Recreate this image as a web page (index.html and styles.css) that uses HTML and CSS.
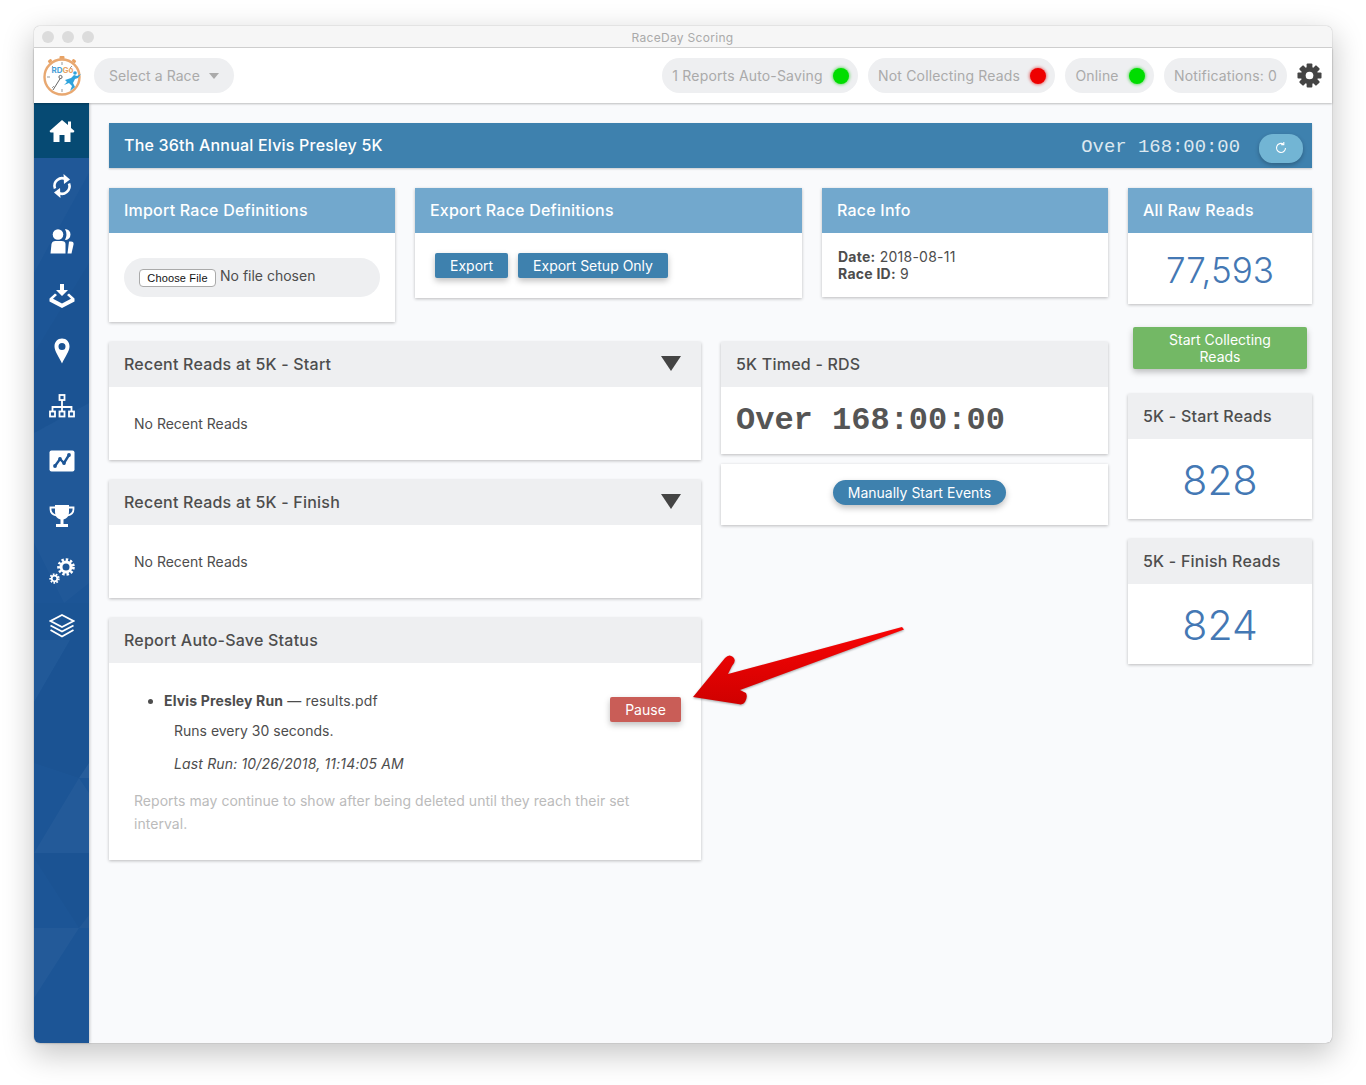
FILE: index.html
```html
<!DOCTYPE html>
<html lang="en">
<head>
<meta charset="utf-8"/>
<title>RaceDay Scoring</title>
<link rel="stylesheet" href="styles.css">
</head>

<body>

<div class="window">

<div class="title_bar">
	<span class="traffic_light"></span>
	<span class="traffic_light"></span>
	<span class="traffic_light"></span>
	<span class="window_title">RaceDay Scoring</span>
</div>

<div class="top_bar">
	<svg class="logo" viewBox="0 0 40 40">
		<rect x="17.500" y="0" width="5" height="3.500" rx="1" fill="#e8a263"/>
		<rect x="6" y="3.500" width="4" height="3" rx="1" fill="#e8a263" transform="rotate(-38 8 5)"/>
		<rect x="30" y="3.500" width="4" height="3" rx="1" fill="#e8a263" transform="rotate(38 32 5)"/>
		<circle cx="20" cy="21" r="17.500" fill="#fff" stroke="#e8a871" stroke-width="2.400"/>
		<path d="M20 6v3M20 33v3M5 21h3M10 10l2 2M30 10l-2 2M10 32l2-2" stroke="#999" stroke-width="1"/>
		<text x="9.500" y="16.500" class="logo_text"><tspan fill="#4a9fd8">RD</tspan><tspan fill="#e8a263">Go</tspan></text>
		<path d="M18.500 22L11 34" stroke="#666" stroke-width="1"/>
		<circle cx="18.500" cy="21" r="1.600" fill="none" stroke="#666" stroke-width="1"/>
		<path d="M23 24l6-2 3-3 3 1 4-2-3 4-3 1-2 4 2 4-5 4 2-5-3-3-5 2 3-3z" fill="#2ea3dc"/>
		<circle cx="33" cy="17" r="1.800" fill="#2ea3dc"/>
	</svg>
	<div class="pill select_race">Select a Race<span class="select_caret"></span></div>
	<div class="status_list">
		<div class="pill">1 Reports Auto-Saving<span class="dot dot_green"></span></div>
		<div class="pill">Not Collecting Reads<span class="dot dot_red"></span></div>
		<div class="pill">Online<span class="dot dot_green"></span></div>
		<div class="pill">Notifications: 0</div>
		<svg class="settings_gear" viewBox="0 0 26 26" fill="#444">
			<rect x="10" y="0.500" width="6" height="25" rx="1"/>
			<rect x="10" y="0.500" width="6" height="25" rx="1" transform="rotate(45 13 13)"/>
			<rect x="10" y="0.500" width="6" height="25" rx="1" transform="rotate(90 13 13)"/>
			<rect x="10" y="0.500" width="6" height="25" rx="1" transform="rotate(135 13 13)"/>
			<circle cx="13" cy="13" r="9"/>
			<circle cx="13" cy="13" r="4" fill="#fff"/>
		</svg>
	</div>
</div>

<div class="app_body">

<nav class="sidebar">
	<svg class="sidebar_pattern" viewBox="0 0 55 940" preserveAspectRatio="none">
		<polygon points="0,55 55,55 55,70 0,170" fill="#fff" opacity="0.02"/>
		<polygon points="0,250 55,160 55,300 0,330" fill="#000" opacity="0.02"/>
		<polygon points="0,330 55,300 55,480 30,500 0,440" fill="#fff" opacity="0.018"/>
		<polygon points="0,500 55,500 55,537 0,537" fill="#000" opacity="0.012"/>
		<polygon points="0,537 36,537 0,599" fill="#fff" opacity="0.025"/>
		<polygon points="0,599 36,537 55,537 55,660 45,675 0,660" fill="#000" opacity="0.02"/>
		<polygon points="45,675 55,690 55,750 0,750" fill="#fff" opacity="0.03"/>
		<polygon points="55,660 45,675 55,675" fill="#fff" opacity="0.05"/>
		<polygon points="0,750 55,750 55,825 45,825 0,755" fill="#000" opacity="0.02"/>
		<polygon points="0,825 45,825 0,895" fill="#fff" opacity="0.03"/>
		<polygon points="45,825 55,812 55,825" fill="#fff" opacity="0.03"/>
	</svg>
	<a class="nav_item nav_item_active">
		<svg class="nav_icon" viewBox="0 0 26 26" fill="#fff">
			<path d="M13 2l6 5V3.500h3V10l3.500 3-1 1.500H21.500V24h-6v-7h-5v7h-6V14.500H1.500l-1-1.500z"/>
		</svg>
	</a>
	<a class="nav_item">
		<svg class="nav_icon" viewBox="0 0 26 26" fill="#fff">
			<path d="M6 15.500A7.500 7.500 0 0 1 17 6.500" fill="none" stroke="#fff" stroke-width="2.600"/>
			<path d="M14.500 1l6.500 5.500-6 4.500z"/>
			<path d="M20 10.500A7.500 7.500 0 0 1 9 19.500" fill="none" stroke="#fff" stroke-width="2.600"/>
			<path d="M11.500 25L5 19.500l6-4.500z"/>
		</svg>
	</a>
	<a class="nav_item">
		<svg class="nav_icon" viewBox="0 0 26 26" fill="#fff">
			<circle cx="9" cy="6.500" r="5.300"/>
			<path d="M1.500 25.500l1-9.500q.5-3 4-3h6q4 0 4 3v9.500z"/>
			<path d="M16 1a5.500 5.500 0 0 1 0 11 12 12 0 0 0 0-11z"/>
			<path d="M18.500 25.500l1.500-12h2q3 0 2.500 3l-2 9z"/>
		</svg>
	</a>
	<a class="nav_item">
		<svg class="nav_icon" viewBox="0 0 26 26" fill="#fff">
			<path d="M11 1h4v6h4l-6 6-6-6h4z"/>
			<path d="M6 10.500L.5 15.500v3L13 25l12.500-6.500v-3L20 10.500 18 12l4 3.800-9 4.700-9-4.700L8 12z"/>
		</svg>
	</a>
	<a class="nav_item">
		<svg class="nav_icon" viewBox="0 0 26 26" fill="#fff" fill-rule="evenodd">
			<path d="M13 .5C8.500 .5 5.500 4 5.500 8.500 5.500 13 10 19 13 25.500 16 19 20.500 13 20.500 8.500 20.500 4 17.500 .5 13 .5zM13 5a3.500 3.500 0 1 1 0 7 3.500 3.500 0 1 1 0-7z"/>
		</svg>
	</a>
	<a class="nav_item">
		<svg class="nav_icon" viewBox="0 0 26 26" fill="none" stroke="#fff" stroke-width="1.800">
			<rect x="10.500" y="2" width="5" height="5"/>
			<path d="M13 7v11M3.500 18v-4h19v4"/>
			<rect x="1" y="18.500" width="5" height="5"/>
			<rect x="10.500" y="18.500" width="5" height="5"/>
			<rect x="20" y="18.500" width="5" height="5"/>
		</svg>
	</a>
	<a class="nav_item">
		<svg class="nav_icon" viewBox="0 0 26 26">
			<rect x=".5" y="2.500" width="25" height="21" rx="2" fill="#fff"/>
			<path d="M6 18l5-7 4 4 5-8" fill="none" stroke="#1c5596" stroke-width="2.400"/>
			<circle cx="6" cy="18" r="1.900" fill="#1c5596"/>
			<circle cx="11" cy="11" r="1.900" fill="#1c5596"/>
			<circle cx="15" cy="15" r="1.900" fill="#1c5596"/>
			<circle cx="20" cy="7" r="1.900" fill="#1c5596"/>
		</svg>
	</a>
	<a class="nav_item">
		<svg class="nav_icon" viewBox="0 0 26 26" fill="#fff">
			<path d="M6 2h14v7q0 6-5.500 7.500V21H19v3H7v-3h4.500v-4.500Q6 15 6 9z"/>
			<path d="M6 4.500H1.500V6Q1.500 11 7 12.500M20 4.500h4.500V6Q24.500 11 19 12.500" fill="none" stroke="#fff" stroke-width="1.800"/>
		</svg>
	</a>
	<a class="nav_item">
		<svg class="nav_icon" viewBox="0 0 26 26" fill="none" stroke="#fff">
			<circle cx="17" cy="9" r="7.400" stroke-width="2.800" stroke-dasharray="2.400 1.900"/>
			<circle cx="17" cy="9" r="5" stroke-width="3"/>
			<circle cx="5.500" cy="20.500" r="4.300" stroke-width="1.800" stroke-dasharray="1.700 1.300"/>
			<circle cx="5.500" cy="20.500" r="2.800" stroke-width="1.800"/>
		</svg>
	</a>
	<a class="nav_item">
		<svg class="nav_icon" viewBox="0 0 26 26" fill="none" stroke="#fff" stroke-width="1.800">
			<path d="M13 2l11.500 6L13 14 1.500 8z"/>
			<path d="M1.500 12.500L13 18.500l11.500-6"/>
			<path d="M1.500 17L13 23.500 24.500 17"/>
		</svg>
	</a>
</nav>

<main class="content">

	<div class="banner">
		<h1 class="banner_title">The 36th Annual Elvis Presley 5K</h1>
		<span class="banner_timer">Over 168:00:00</span>
		<button class="refresh_button">
			<svg class="refresh_icon" viewBox="0 0 14 14" fill="none" stroke="#fff" stroke-width="1.100">
				<path d="M11.500 7A4.500 4.500 0 1 1 9.500 3.200"/>
				<path d="M9.800 .9v2.700H7.200"/>
			</svg>
		</button>
	</div>

	<div class="columns">

		<div class="left_area">

			<div class="top_row">
				<section class="card import_card">
					<h2 class="card_head card_head_blue">Import Race Definitions</h2>
					<div class="import_body">
						<div class="file_pill">
							<button class="file_button">Choose File</button>
							<span class="file_status">No file chosen</span>
						</div>
					</div>
				</section>

				<section class="card export_card">
					<h2 class="card_head card_head_blue">Export Race Definitions</h2>
					<div class="export_body">
						<button class="button">Export</button>
						<button class="button">Export Setup Only</button>
					</div>
				</section>

				<section class="card import_card">
					<h2 class="card_head card_head_blue">Race Info</h2>
					<div class="info_body">
						<div><b>Date:</b> 2018-08-11</div>
						<div><b>Race ID:</b> 9</div>
					</div>
				</section>
			</div>

			<div class="lower_row">

				<div class="reads_column">
					<section class="card">
						<h2 class="card_head">Recent Reads at 5K - Start <span class="collapse_caret"></span></h2>
						<div class="empty_reads">No Recent Reads</div>
					</section>
					<section class="card">
						<h2 class="card_head">Recent Reads at 5K - Finish <span class="collapse_caret"></span></h2>
						<div class="empty_reads">No Recent Reads</div>
					</section>
					<section class="card">
						<h2 class="card_head">Report Auto-Save Status</h2>
						<div class="report_body">
							<div class="report_row">
								<div class="report_text">
									<ul class="report_list">
										<li><b>Elvis Presley Run</b> — results.pdf</li>
									</ul>
									<p class="report_line">Runs every 30 seconds.</p>
									<p class="report_line report_last"><i>Last Run: 10/26/2018, 11:14:05 AM</i></p>
								</div>
								<button class="button button_red">Pause</button>
							</div>
							<p class="report_note">Reports may continue to show after being deleted until they reach their set interval.</p>
						</div>
					</section>
				</div>

				<div class="timer_column">
					<section class="card">
						<h2 class="card_head">5K Timed - RDS</h2>
						<div class="big_timer">Over 168:00:00</div>
					</section>
					<section class="card start_card">
						<button class="button button_round">Manually Start Events</button>
					</section>
				</div>

			</div>
		</div>

		<div class="right_column">
			<section class="card">
				<h2 class="card_head card_head_blue">All Raw Reads</h2>
				<div class="count count_small">77,593</div>
			</section>
			<button class="button button_green">Start Collecting Reads</button>
			<section class="card">
				<h2 class="card_head">5K - Start Reads</h2>
				<div class="count">828</div>
			</section>
			<section class="card finish_card">
				<h2 class="card_head">5K - Finish Reads</h2>
				<div class="count">824</div>
			</section>
		</div>

	</div>
</main>

</div>

<svg class="red_arrow" viewBox="0 0 220 90">
	<defs>
		<linearGradient id="arrow_fill" x1="0" y1="0" x2="0" y2="1">
			<stop offset="0" stop-color="#f80505"/>
			<stop offset="1" stop-color="#cf0000"/>
		</linearGradient>
	</defs>
	<path d="M3 73L35 34Q39 29.500 43 33T42 42L38 50 212 3 214 5.500 50 66 56 69Q58 73 55 78 53 81.500 48 80z" fill="url(#arrow_fill)"/>
</svg>

</div>

</body>
</html>
```

FILE: styles.css
```css
html, body {
margin: 0;
padding: 0;
}

body {
font: 14px Inter, "Liberation Sans", sans-serif;
color: #4d4d4d;
background-color: #ffffff;
padding: 26px 34px 0;
height: 1059px;
overflow: hidden;
}

h1, h2, p, ul {
margin: 0;
}

button {
font: inherit;
letter-spacing: inherit;
border: none;
cursor: pointer;
}


/* window frame */


.window {
position: relative;
width: 1298px;
height: 1017px;
display: flex;
flex-direction: column;
background-color: #f9fafc;
border-radius: 6px;
box-shadow: 0 0 1px 0 rgba(0, 0, 0, 0.5), 0 10px 30px 2px rgba(0, 0, 0, 0.22);
}

.title_bar {
height: 21px;
flex: none;
display: flex;
align-items: center;
gap: 8px;
padding-left: 8px;
background-color: #f6f6f6;
border-bottom: 1px solid #d2d2d2;
border-radius: 6px 6px 0 0;
}

.traffic_light {
width: 12px;
height: 12px;
border-radius: 50%;
background-color: #dcdcdc;
}

.window_title {
flex: 1;
text-align: center;
font-size: 12px;
letter-spacing: 0.3px;
color: #aaaaaa;
margin-left: -69px;
margin-top: 2px;
}


/* top bar */


.top_bar {
height: 55px;
flex: none;
display: flex;
align-items: center;
padding: 0 10px 0 8px;
background-color: #ffffff;
box-shadow: 0 1px 2px rgba(0, 0, 0, 0.25);
position: relative;
z-index: 1;
}

.logo {
width: 40px;
height: 40px;
margin-right: 12px;
flex: none;
}

.logo_text {
font: bold 8px Inter, sans-serif;
}

.pill {
height: 35px;
display: flex;
align-items: center;
padding: 0 10px;
border-radius: 18px;
background-color: #eeeff1;
color: #aaaaaa;
letter-spacing: 0.17px;
white-space: pre;
}

.select_race {
padding: 0 15px;
letter-spacing: 0.07px;
}

.select_caret {
width: 0;
height: 0;
margin-left: 9px;
border-left: 5px solid transparent;
border-right: 5px solid transparent;
border-top: 6px solid #aaaaaa;
}

.status_list {
margin-left: auto;
display: flex;
align-items: center;
gap: 10px;
}

.dot {
width: 16px;
height: 16px;
border-radius: 50%;
margin-left: 10.300px;
margin-right: -1px;
}

.dot_green {
background-color: #00dd00;
box-shadow: 0 0 3px 1px rgba(0, 200, 0, 0.5);
}

.dot_red {
background-color: #ee0000;
box-shadow: 0 0 3px 1px rgba(220, 0, 0, 0.5);
}

.settings_gear {
width: 25px;
height: 25px;
}


/* sidebar */


.app_body {
flex: 1;
display: flex;
min-height: 0;
}

.sidebar {
width: 55px;
flex: none;
position: relative;
overflow: hidden;
background-color: #1c5596;
border-radius: 0 0 0 6px;
box-shadow: 1px 0 3px rgba(0, 0, 0, 0.2);
}

/* the faint triangles behind the icons */
.sidebar_pattern {
position: absolute;
left: 0;
top: 0;
width: 55px;
height: 940px;
}

.nav_item {
height: 55px;
display: flex;
align-items: center;
justify-content: center;
position: relative;
}

.nav_item_active {
background-color: #064a73;
}

.nav_icon {
width: 26px;
height: 26px;
}


/* main content */


.content {
flex: 1;
padding: 20px;
display: flex;
flex-direction: column;
gap: 20px;
}

.banner {
height: 45px;
display: flex;
align-items: center;
padding: 0 9px 0 15px;
background-color: #3e81ae;
color: #ffffff;
box-shadow: 0 1px 2px rgba(0, 0, 0, 0.2);
}

.banner_title {
font-size: 16px;
font-weight: 500;
letter-spacing: 0.2px;
flex: 1;
padding-bottom: 2px;
}

.banner_timer {
font: 18.900px "Liberation Mono", monospace;
color: #dce8f0;
margin-right: 19px;
padding-top: 2px;
}

.refresh_button {
width: 44px;
height: 29px;
margin-top: 5px;
border-radius: 14px;
background-color: #72b5d4;
box-shadow: 0 2px 4px rgba(0, 0, 0, 0.25);
display: flex;
align-items: center;
justify-content: center;
}

.refresh_icon {
width: 14px;
height: 14px;
}

.columns {
display: flex;
gap: 20px;
align-items: flex-start;
}

.left_area {
width: 999px;
display: flex;
flex-direction: column;
gap: 20px;
}

.top_row, .lower_row {
display: flex;
gap: 20px;
align-items: flex-start;
}

.reads_column {
width: 592px;
display: flex;
flex-direction: column;
gap: 20px;
}

.timer_column {
width: 387px;
display: flex;
flex-direction: column;
gap: 10px;
}

.right_column {
width: 184px;
display: flex;
flex-direction: column;
}


/* cards */


.card {
background-color: #ffffff;
box-shadow: 0 1px 3px rgba(0, 0, 0, 0.25);
}

.card_head {
height: 45px;
box-sizing: border-box;
display: flex;
align-items: center;
justify-content: space-between;
padding: 0 20px 2px 15px;
font-size: 16px;
font-weight: 500;
letter-spacing: 0.22px;
color: #4d4d4d;
background-color: #eeeff1;
}

.card_head_blue {
color: #ffffff;
background-color: #72a8cd;
}

.collapse_caret {
width: 0;
height: 0;
border-left: 10px solid transparent;
border-right: 10px solid transparent;
border-top: 15px solid #444444;
}

.import_card {
width: 286px;
}

.export_card {
width: 387px;
}

.import_body {
padding: 25px 15px;
}

.file_pill {
height: 39px;
display: flex;
align-items: center;
padding: 0 15px;
border-radius: 20px;
background-color: #eeeff1;
}

.file_button {
width: 77px;
height: 18px;
margin: 0 4px 0 0;
padding: 0;
font: 11px "Liberation Sans", sans-serif;
letter-spacing: 0.15px;
color: #111111;
background-color: #ffffff;
border: 1px solid #aaaaaa;
border-radius: 4px;
}

.file_status {
padding-bottom: 4px;
}

.export_body {
padding: 20px;
display: flex;
gap: 10px;
}

.info_body {
padding: 15px 16px;
line-height: 17px;
letter-spacing: 0.25px;
}

.button {
height: 25px;
padding: 0 15px;
color: #ffffff;
background-color: #3e81ae;
border-radius: 2px;
box-shadow: 0 3px 6px rgba(0, 0, 0, 0.25);
}

.button_red {
flex: none;
width: 71px;
padding: 0;
margin-top: 8px;
background-color: #c95d57;
}

.button_round {
border-radius: 13px;
}

.button_green {
height: 42px;
margin: 23px 5px 25px;
padding: 0 20px;
line-height: 17px;
background-color: #73b865;
}

.start_card {
height: 61px;
display: flex;
justify-content: center;
padding: 16px 0 0 10px;
box-sizing: border-box;
}

.empty_reads {
height: 73px;
display: flex;
align-items: center;
padding-left: 25px;
}

.report_body {
padding: 26px 20px 25px 25px;
}

.report_row {
display: flex;
justify-content: space-between;
}

.report_list {
padding-left: 30px;
line-height: 24px;
letter-spacing: 0.15px;
}

.report_line {
padding-left: 40px;
margin-top: 7px;
line-height: 21px;
}

.report_last {
margin-top: 12px;
letter-spacing: 0.15px;
}

.report_note {
margin-top: 15px;
line-height: 23px;
letter-spacing: 0.04px;
color: #bbbbbb;
}

.big_timer {
height: 67px;
display: flex;
align-items: center;
padding: 0 15px;
font: bold 32px "Liberation Mono", monospace;
color: #555555;
white-space: pre;
}

.count {
height: 80px;
box-sizing: border-box;
padding-top: 2px;
display: flex;
align-items: center;
justify-content: center;
font-size: 41px;
font-weight: 300;
color: #4478b4;
}

.count_small {
height: 71px;
font-size: 35px;
}

.finish_card {
margin-top: 20px;
}

/* annotation drawn on top of the screenshot */
.red_arrow {
position: absolute;
left: 656px;
top: 598px;
width: 220px;
height: 90px;
filter: drop-shadow(0 1px 1px rgba(0, 0, 0, 0.35));
}
```
